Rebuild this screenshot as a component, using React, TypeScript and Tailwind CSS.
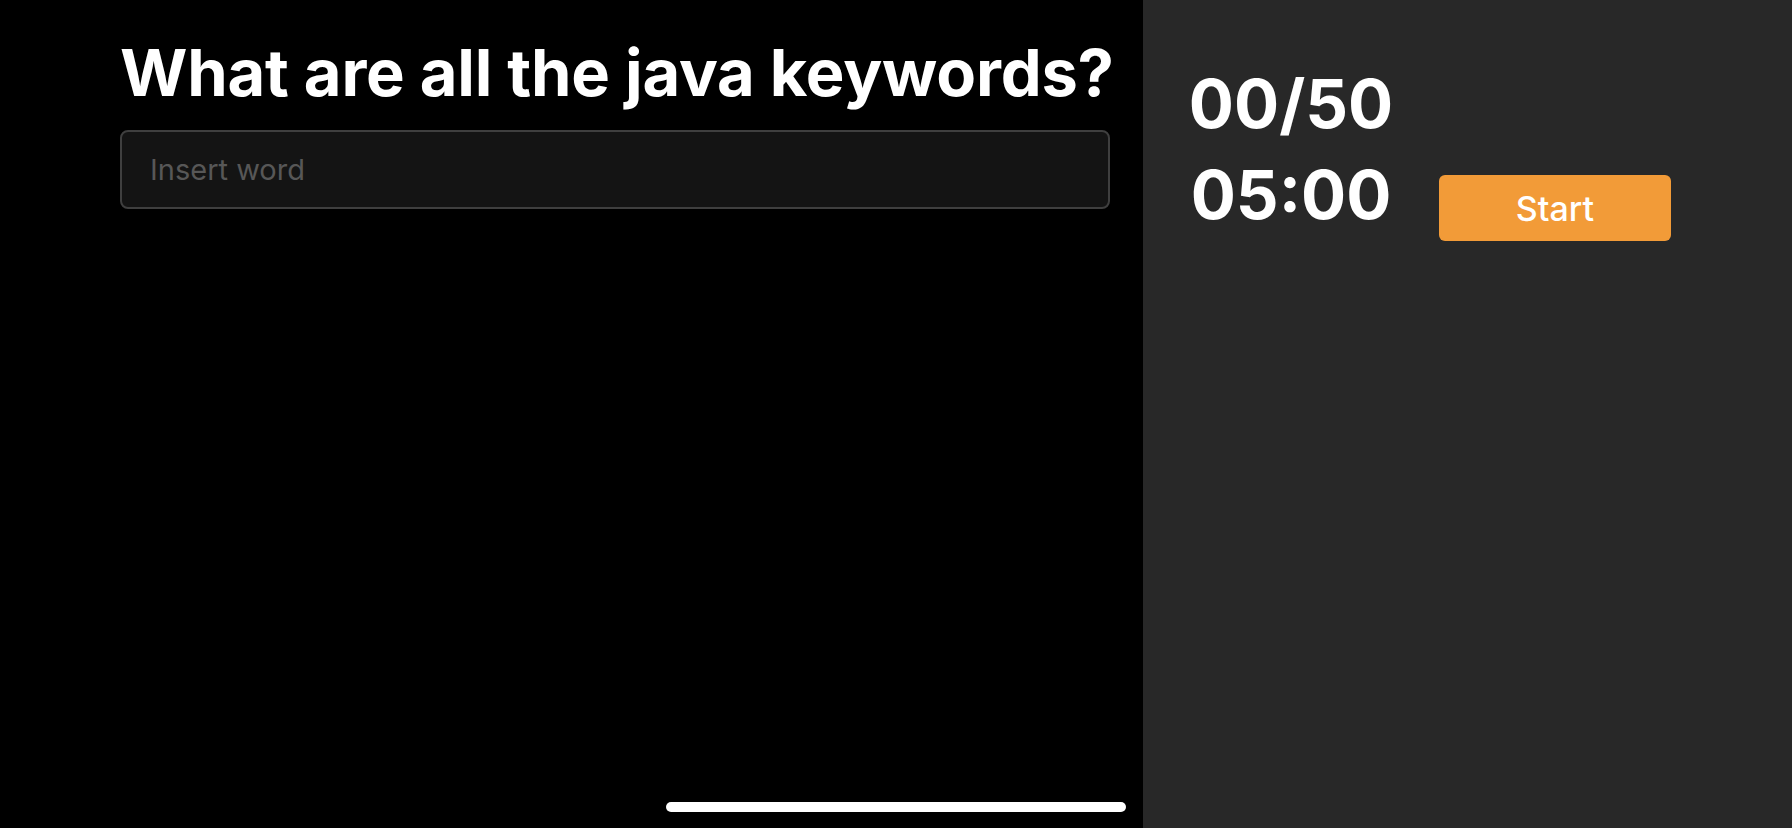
import { useState } from "react";

const App = () => {
  const [word, setWord] = useState("");

  return (
    <div
      className="flex h-[828px] w-[1792px] overflow-hidden bg-black text-white"
      style={{ fontFamily: "Inter, 'Noto Sans', sans-serif" }}
    >
      {/* Quiz */}
      <div className="relative flex w-[1143px] flex-col pl-[120px] pr-[33px] pt-[34px]">
        <h1 className="whitespace-nowrap text-[65px] font-bold leading-[78px] tracking-[-0.2px]">
          What are all the java keywords?
        </h1>
        <input
          value={word}
          onChange={(e) => setWord(e.target.value)}
          placeholder="Insert word"
          className="mt-[18px] h-[79px] w-full rounded-lg border-2 border-[#3f3f3f] bg-[#141414] px-[28px] text-[29px] text-white outline-none placeholder:text-[#575757]"
        />
        {/* home indicator */}
        <div className="absolute bottom-[16px] left-[666px] h-[10px] w-[460px] rounded-full bg-white" />
      </div>

      {/* Score + timer */}
      <div className="flex flex-1 items-start bg-[#282828] pt-[58px]">
        <div className="flex w-[296px] flex-col items-center">
          <span className="text-[67px] font-bold leading-[91px]">00/50</span>
          <span className="text-[67px] font-bold leading-[91px]">05:00</span>
        </div>
        <button className="mt-[117px] h-[66px] w-[232px] rounded-md bg-[#f29b38] text-[34px] font-medium text-white">
          Start
        </button>
      </div>
    </div>
  );
};

export default App;
